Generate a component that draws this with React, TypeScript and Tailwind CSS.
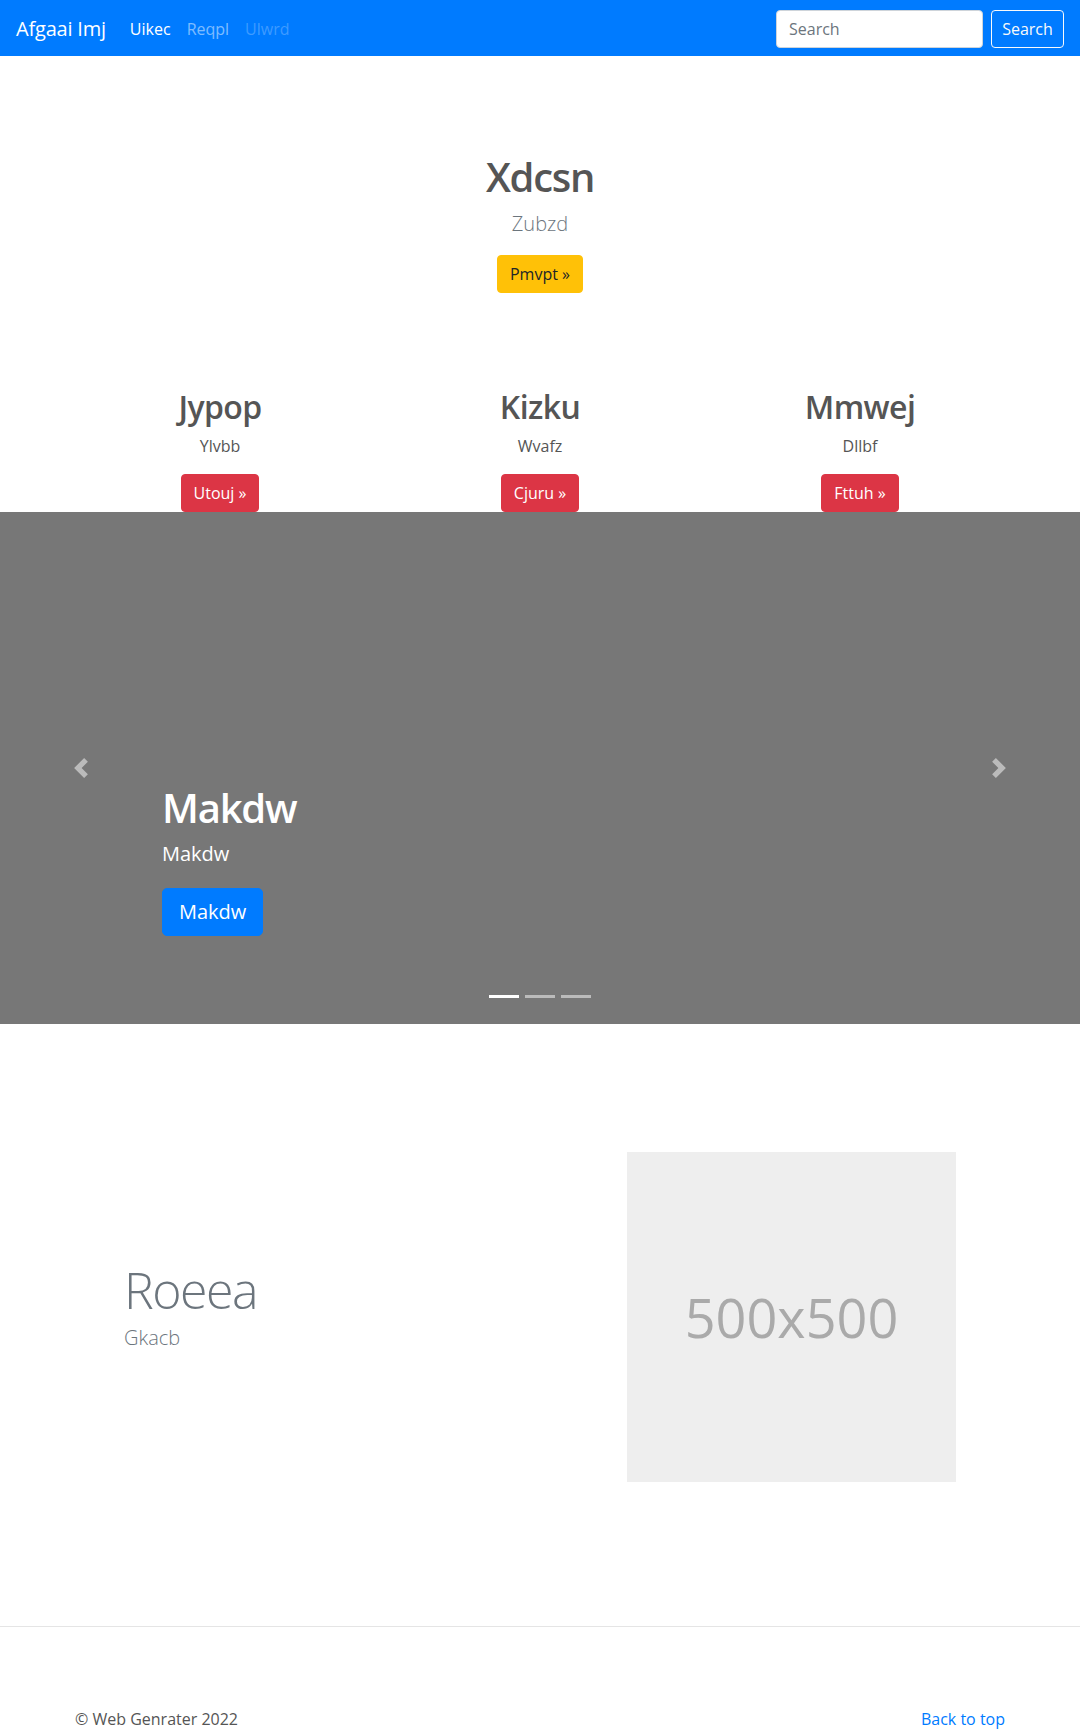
const features = [
  { title: 'Jypop', text: 'Ylvbb', cta: 'Utouj' },
  { title: 'Kizku', text: 'Wvafz', cta: 'Cjuru' },
  { title: 'Mmwej', text: 'Dllbf', cta: 'Fttuh' },
]

function CarouselArrow({ dir }: { dir: 'prev' | 'next' }) {
  // bootstrap-style chevrons, drawn in an 8x8 box
  const d =
    dir === 'prev'
      ? 'M5.25 0l-4 4 4 4 1.5-1.5L4.25 4l2.5-2.5L5.25 0z'
      : 'M2.75 0l-1.5 1.5L3.75 4l-2.5 2.5L2.75 8l4-4-4-4z'
  return (
    <a
      href="#"
      aria-label={dir === 'prev' ? 'Previous' : 'Next'}
      className={`absolute top-0 bottom-0 flex w-[15%] items-center justify-center opacity-50 ${
        dir === 'prev' ? 'left-0' : 'right-0'
      }`}
    >
      <svg width="20" height="20" viewBox="0 0 8 8" fill="#fff">
        <path d={d} />
      </svg>
    </a>
  )
}

export default function App() {
  return (
    <div className="min-h-[1731px] bg-white font-['Open_Sans',sans-serif] text-[16px] leading-6 text-[#555]">
      {/* Navbar */}
      <nav className="flex h-14 items-center bg-[#007bff] px-4 pt-px">
        <a href="#" className="mr-4 text-[20px] leading-[30px] tracking-[-0.2px] text-white">
          Afgaai Imj
        </a>
        <ul className="flex">
          <li>
            <a href="#" className="block px-2 py-2 text-white">
              Uikec
            </a>
          </li>
          <li>
            <a href="#" className="block px-2 py-2 text-white/50">
              Reqpl
            </a>
          </li>
          <li>
            <a href="#" className="block px-2 py-2 text-white/25">
              Ulwrd
            </a>
          </li>
        </ul>
        <form className="ml-auto flex items-center">
          <input
            type="text"
            placeholder="Search"
            className="mr-2 h-[38px] w-[207px] rounded border border-[#ced4da] bg-white px-3 text-[16px] text-[#495057] placeholder:text-[#6c757d] outline-none"
          />
          <button
            type="button"
            className="h-[38px] w-[73px] rounded border border-[#f8f9fa] text-[16px] text-[#f8f9fa]"
          >
            Search
          </button>
        </form>
      </nav>

      {/* Hero */}
      <section className="pt-[97px] pb-[95px] text-center">
        <h1 className="mb-2 text-[40px] leading-[48px] font-semibold tracking-[-1.3px] text-[#555]">
          Xdcsn
        </h1>
        <p className="mb-4 text-[20px] leading-[30px] font-light text-[#6c757d]">Zubzd</p>
        <a
          href="#"
          className="inline-block rounded border border-[#ffc107] bg-[#ffc107] px-3 py-1.5 text-[16px] leading-6 text-[#212529]"
        >
          Pmvpt »
        </a>
      </section>

      {/* Columns */}
      <section className="mx-auto grid w-[960px] grid-cols-3 text-center">
        {features.map((f) => (
          <div key={f.title}>
            <h2 className="mb-2 text-[32px] leading-[38px] font-semibold tracking-[-0.6px] text-[#555]">
              {f.title}
            </h2>
            <p className="mb-4">{f.text}</p>
            <a
              href="#"
              className="inline-block rounded border border-[#dc3545] bg-[#dc3545] px-3 py-1.5 text-[16px] leading-6 text-white"
            >
              {f.cta} »
            </a>
          </div>
        ))}
      </section>

      {/* Carousel */}
      <div className="relative h-[512px] bg-[#777]">
        <div className="absolute right-[15%] bottom-12 left-[15%] py-5 text-left text-white">
          <h1 className="mb-2 text-[40px] leading-[48px] font-semibold tracking-[-1.2px]">Makdw</h1>
          <p className="mb-5 text-[20px] leading-[28px]">Makdw</p>
          <p className="mb-5">
            <a
              href="#"
              className="inline-block rounded-[5px] border border-[#007bff] bg-[#007bff] px-4 py-2 text-[20px] leading-[30px] text-white"
            >
              Makdw
            </a>
          </p>
        </div>
        <CarouselArrow dir="prev" />
        <CarouselArrow dir="next" />
        <div className="absolute right-0 bottom-[26px] left-0 flex justify-center gap-[6px]">
          <span className="h-[3px] w-[30px] bg-white" />
          <span className="h-[3px] w-[30px] bg-white/50" />
          <span className="h-[3px] w-[30px] bg-white/50" />
        </div>
      </div>

      {/* Featurette */}
      <section className="mx-auto mt-32 flex w-[960px] items-center">
        <div className="flex-1 pl-[64px]">
          <h2 className="mb-2 text-[50px] leading-none font-light tracking-[-1.5px] text-[#6c757d]">
            Roeea
          </h2>
          <p className="mb-4 text-[20px] leading-[30px] font-light text-[#6c757d]">Gkacb</p>
        </div>
        <div className="mr-16 flex h-[330px] w-[329px] items-center justify-center bg-[#eee]">
          <span className="text-[54px] leading-none text-[#aaa]">500x500</span>
        </div>
      </section>

      {/* Footer */}
      <footer className="mt-[144px] border-t border-[#e5e5e5] pt-[80px]">
        <div className="mx-auto flex w-[930px] justify-between">
          <p>© Web Genrater 2022</p>
          <a href="#" className="text-[#007bff]">
            Back to top
          </a>
        </div>
      </footer>
    </div>
  )
}
